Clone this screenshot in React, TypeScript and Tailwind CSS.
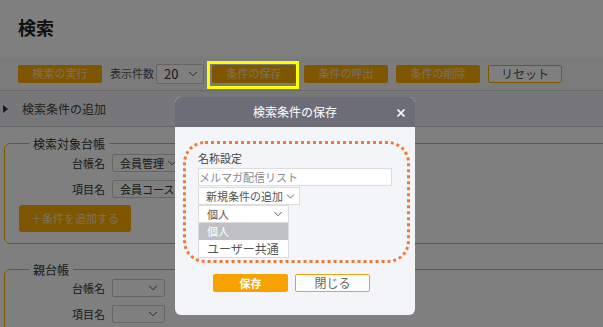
import React from "react";
import { ChevronDown, X } from "lucide-react";

const Chevron = ({ className = "", size = 14 }: { className?: string; size?: number }) => (
  <ChevronDown size={size} strokeWidth={1.6} className={`shrink-0 ${className}`} />
);

const ToolButton = ({ label }: { label: string }) => (
  <button
    type="button"
    className="flex h-[18px] w-[84px] items-center justify-center rounded-[2px] bg-[#ffad00] text-[11px] leading-none text-[#f6e2c0]"
  >
    {label}
  </button>
);

const FieldRow = ({ label, value, width }: { label: string; value: string; width: string }) => (
  <div className="flex items-center gap-[7px]">
    <span className="w-[89px] text-right text-[11px] text-[#333]">{label}</span>
    <div
      className={`flex h-[18px] items-center justify-between rounded-[2px] border border-[#ccc] bg-white pl-[7px] pr-[4px] text-[11px] text-[#333] ${width}`}
    >
      <span>{value}</span>
      <Chevron className="text-[#444]" />
    </div>
  </div>
);

const App = () => {
  return (
    <div className="relative h-[327px] w-[603px] overflow-hidden bg-white font-['Noto_Sans_CJK_JP','Noto_Sans',sans-serif]">
      {/* page */}
      <div className="flex h-[57px] items-center pl-[18px] pb-[2px] text-[18px] font-bold text-[#222]">
        検索
      </div>

      <div className="flex h-[34px] items-center gap-[8px] border-b border-[#d4d4d4] bg-[#f6f6f6] px-[18px]">
        <ToolButton label="検索の実行" />
        <div className="flex items-center gap-[2px]">
          <span className="text-[11px] text-[#555]">表示件数</span>
          <div className="flex h-[20px] w-[48px] items-center justify-between rounded-[2px] border border-[#ccc] bg-white pl-[7px] pr-[3px] text-[13px] text-[#333]">
            <span>20</span>
            <Chevron className="text-[#444]" />
          </div>
        </div>
        <ToolButton label="条件の保存" />
        <ToolButton label="条件の呼出" />
        <ToolButton label="条件の削除" />
        <button
          type="button"
          className="flex h-[18px] w-[74px] items-center justify-center rounded-[2px] border border-[#ffad00] bg-white text-[12px] leading-none text-[#555]"
        >
          リセット
        </button>
      </div>

      <div className="flex h-[36px] items-center border-b border-[#cfcfcf] bg-[#eeeff2] text-[12px] text-[#444]">
        <span className="ml-[3px] mr-[14px] h-0 w-0 border-y-[4px] border-l-[5px] border-y-transparent border-l-[#333]" />
        検索条件の追加
      </div>

      <div className="pl-[4px] pt-[7px]">
        <fieldset className="mr-[-30px] h-[110px] rounded-[6px] border border-[#ffad00] pl-[11px]">
          <legend className="ml-[13px] px-[4px] text-[12px] leading-[19px] text-[#333]">検索対象台帳</legend>
          <div className="flex flex-col gap-[8px] pt-[1px]">
            <FieldRow label="台帳名" value="会員管理" width="w-[72px]" />
            <FieldRow label="項目名" value="会員コース" width="w-[90px]" />
          </div>
          <button
            type="button"
            className="mt-[7px] ml-[3px] flex h-[27px] w-[112px] items-center justify-center rounded-[3px] bg-[#ffad00] text-[11px] text-[#f6e2c0]"
          >
            ＋条件を追加する
          </button>
        </fieldset>

        <fieldset className="mr-[-30px] mt-[16px] h-[80px] rounded-[6px] border border-[#ffad00] pl-[11px]">
          <legend className="ml-[13px] px-[4px] text-[12px] leading-[19px] text-[#333]">親台帳</legend>
          <div className="flex flex-col gap-[8px]">
            <FieldRow label="台帳名" value="" width="w-[53px]" />
            <FieldRow label="項目名" value="" width="w-[53px]" />
          </div>
        </fieldset>
      </div>

      {/* overlay */}
      <div className="absolute inset-0 bg-black/50" />

      {/* highlight around the save button */}
      <div className="absolute left-[207px] top-[61px] h-[28px] w-[92px] border-[3px] border-[#ffff00]" />

      {/* modal */}
      <div className="absolute left-[175px] top-[97px] h-[218px] w-[240px] overflow-hidden rounded-[6px] bg-[#f4f5f9]">
        <div className="relative flex h-[30px] items-center justify-center bg-[#6c6d77] text-[12px] text-white">
          検索条件の保存
          <X size={12} strokeWidth={3.4} className="absolute right-[8px] top-[10px] text-white" />
        </div>

        <div className="px-[8px] pt-[14px]">
          <div className="h-[122px] w-[227px] rounded-[22px] border-[3px] border-dotted border-[#f07a35] pl-[12px] pt-[6px]">
            <div className="text-[11px] leading-[16px] text-[#444]">名称設定</div>
            <div className="mt-[2px] flex h-[18px] w-[194px] items-center border border-[#ddd] bg-white text-[11px] text-[#888]">
              メルマガ配信リスト
            </div>
            <div className="mt-[1px] flex h-[18px] w-[102px] items-center justify-between whitespace-nowrap border border-[#ddd] bg-white pl-[7px] pr-[2px] text-[11px] text-[#555]">
              <span>新規条件の追加</span>
              <Chevron size={13} className="text-[#555]" />
            </div>
            <div className="flex h-[18px] w-[91px] items-center justify-between border border-[#ddd] bg-white pl-[8px] pr-[3px] text-[11px] text-[#555]">
              <span>個人</span>
              <Chevron className="text-[#555]" />
            </div>
            <div className="w-[91px] border border-t-0 border-[#ddd] bg-white text-[11px]">
              <div className="flex h-[17px] items-center bg-[#bfc0c3] pl-[8px] text-white">個人</div>
              <div className="flex h-[17px] items-center pl-[8px] text-[12px] text-[#555]">ユーザー共通</div>
            </div>
          </div>
        </div>

        <div className="flex gap-[7px] pl-[38px] pt-[11px]">
          <button
            type="button"
            className="flex h-[18px] w-[75px] items-center justify-center rounded-[2px] bg-[#f7a200] text-[11px] font-bold leading-none text-white"
          >
            保存
          </button>
          <button
            type="button"
            className="flex h-[18px] w-[75px] items-center justify-center rounded-[2px] border border-[#f7a200] bg-white text-[12px] leading-none text-[#666]"
          >
            閉じる
          </button>
        </div>
      </div>
    </div>
  );
};

export default App;
